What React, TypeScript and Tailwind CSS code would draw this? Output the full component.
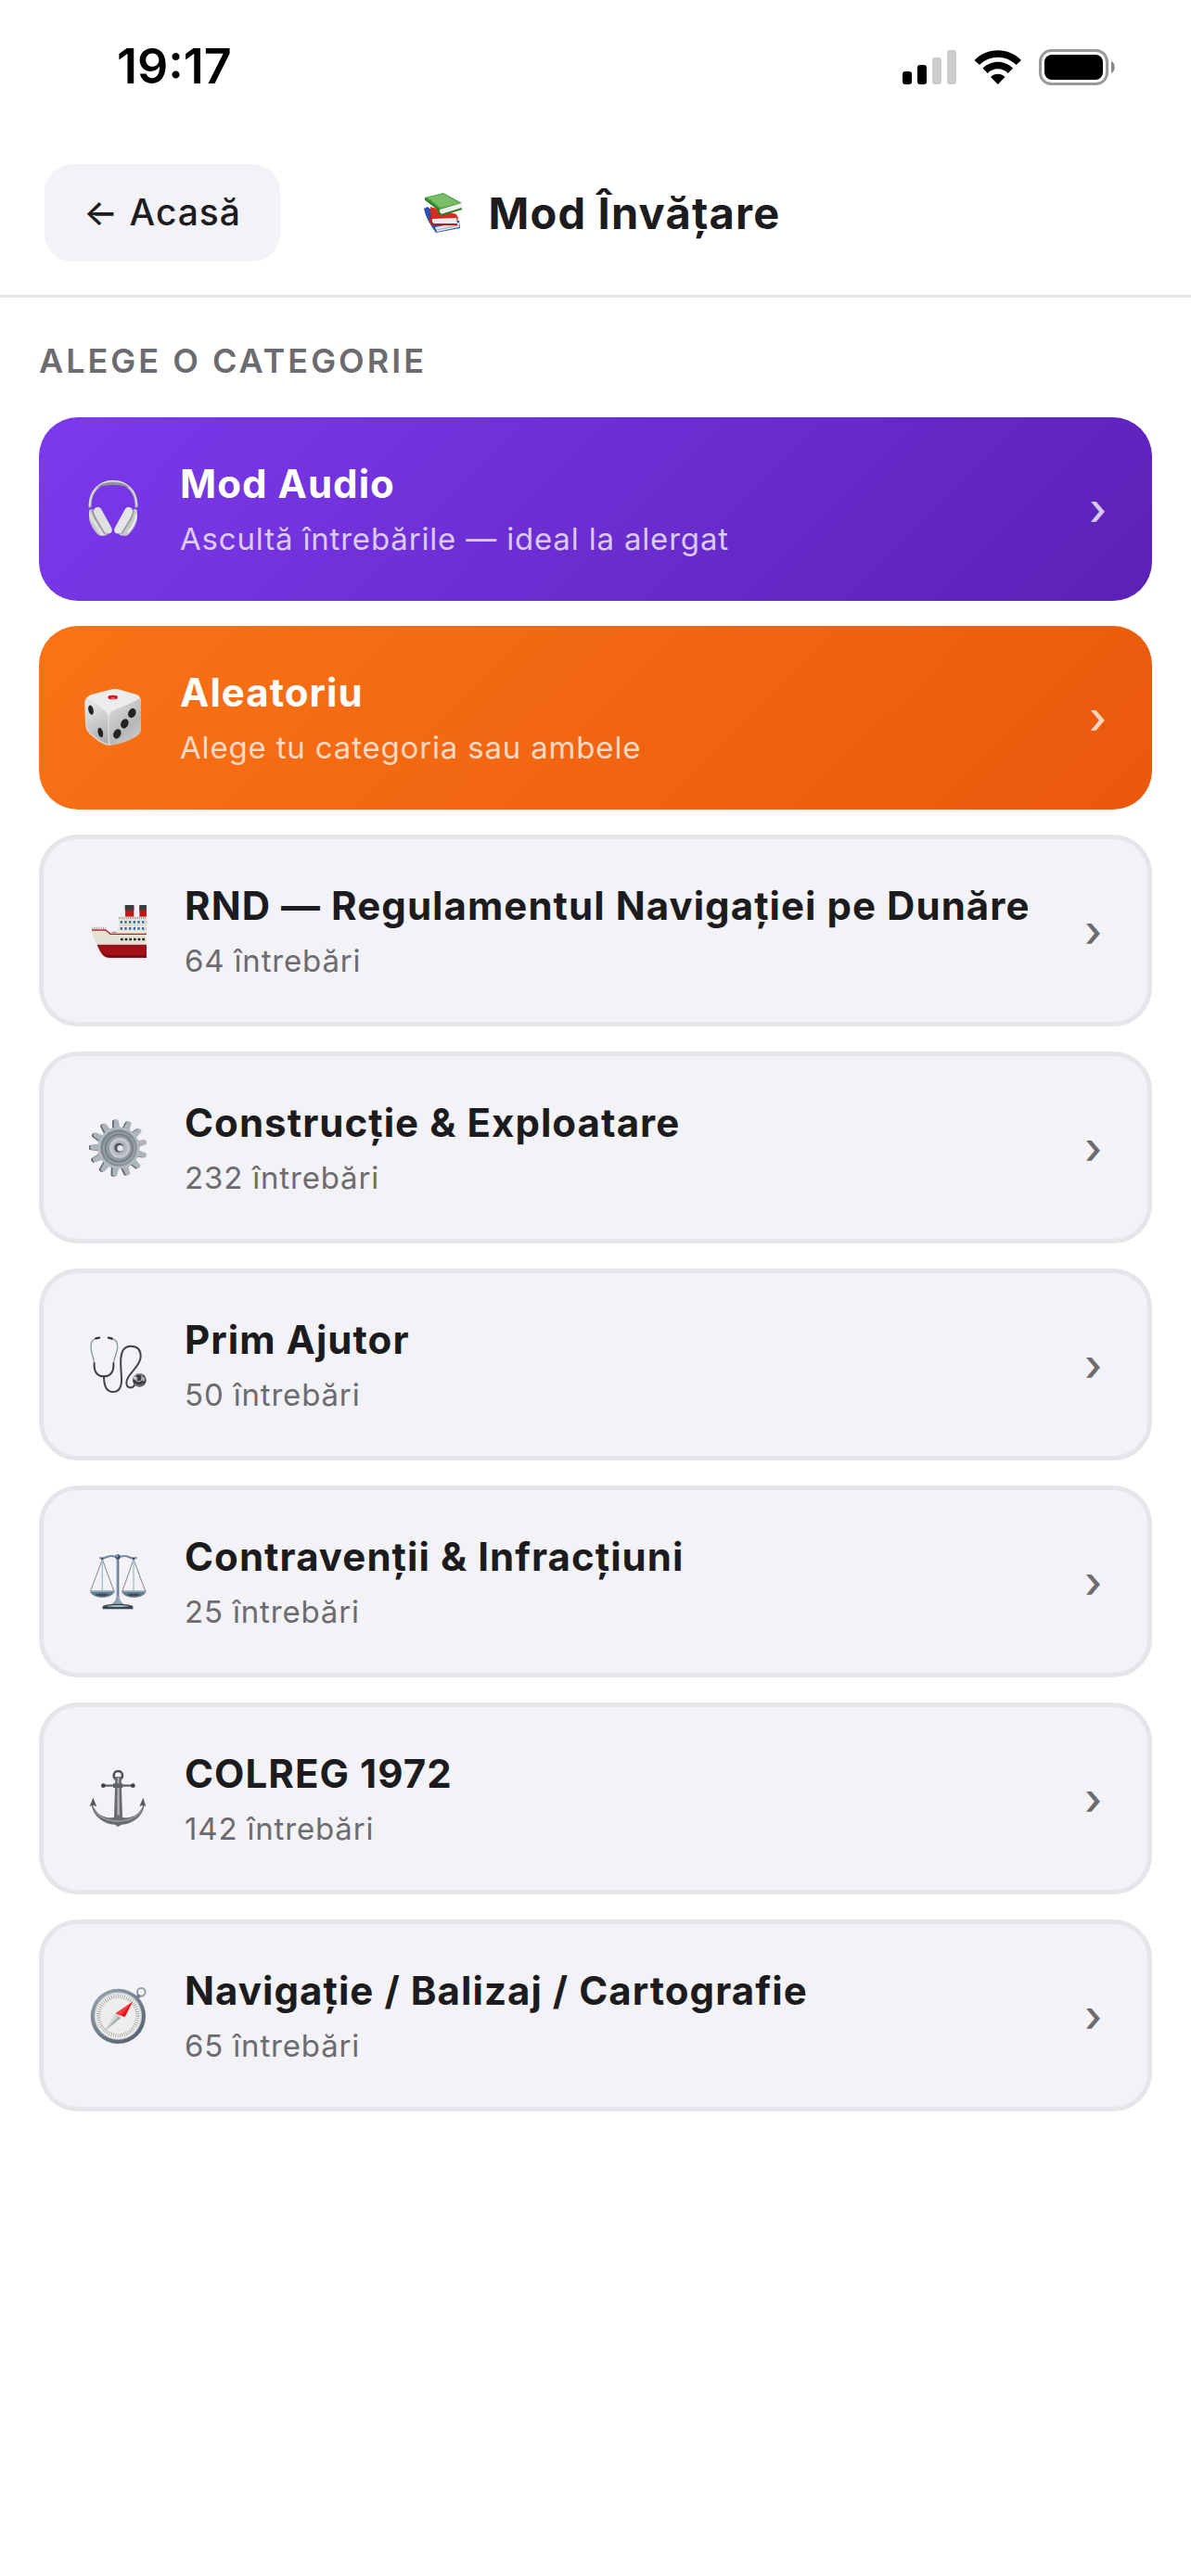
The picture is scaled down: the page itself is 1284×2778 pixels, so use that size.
import type { ReactNode } from 'react'

type Category = {
  title: string
  subtitle: string
  icon: ReactNode
  variant?: 'audio' | 'random'
}

const variants = {
  audio: 'bg-linear-135 from-[#7c3aed] to-[#5b21b6] py-[42px] text-white',
  random: 'bg-linear-135 from-[#f97316] to-[#ea580c] py-[42px] text-white',
  plain: 'border-5 border-[#e5e5ea] bg-[#f2f2f7] pt-[42px] pb-[41px] text-[#1c1c1e]',
}

function Icon({ viewBox, children }: { viewBox: string; children: ReactNode }) {
  return (
    <svg viewBox={viewBox} className="size-[62px] shrink-0" fill="none" aria-hidden="true">
      {children}
    </svg>
  )
}

function Headphones() {
  return (
    <Icon viewBox="183 234 186 186">
      <defs>
        <linearGradient id="cupL" x1="203" y1="385" x2="260" y2="350" gradientUnits="userSpaceOnUse">
          <stop stopColor="#a9abad" />
          <stop offset=".3" stopColor="#e2e4e5" />
          <stop offset=".5" stopColor="#a3a5a7" />
          <stop offset=".7" stopColor="#e9e9ea" />
          <stop offset="1" stopColor="#c4c5c6" />
        </linearGradient>
      </defs>
      <path d="M201 322v-10c2-44 32-74 75-74s73 30 75 74v10" stroke="#b9bbbd" strokeWidth="9" />
      <path d="M200 316c0-48 32-80 76-80s76 32 76 80" stroke="#f1f1f2" strokeWidth="3" />
      <path d="M222 258c16-14 34-17 54-17s38 3 54 17c-16-6-34-9-54-9s-38 3-54 9z" fill="#8f9193" />
      <path d="M198 334v22c2 18 14 40 30 54 8 5 20 4 29 1 2-3 1-8-1-12l-44-70c-6-4-13-2-14 5z" fill="url(#cupL)" />
      <path d="M215 326c6-8 17-8 22 0l33 60c5 9 2 17-6 20-8 2-15-2-19-9l-29-53c-3-7-4-13-1-18z" fill="#dfe0e1" />
      <path d="M210 330c0 10 4 20 10 31l29 46" stroke="#929496" strokeWidth="4" />
      <path d="M354 334v22c-2 18-14 40-30 54-8 5-18 4-27 1-2-3-1-8 1-12l42-70c6-4 13-2 14 5z" fill="#c9cbcd" />
      <path d="M337 326c-6-8-17-8-22 0l-33 60c-5 9-2 17 6 20 8 2 15-2 19-9l29-53c3-7 4-13 1-18z" fill="#e4e5e6" />
      <path d="M342 330c0 10-4 20-10 31l-29 46" stroke="#929496" strokeWidth="4" />
      <path d="M350 344c0 22-12 42-27 58" stroke="#eff0f1" strokeWidth="5" />
    </Icon>
  )
}

function Dice() {
  return (
    <Icon viewBox="183 249 186 186">
      <defs>
        <linearGradient id="dieFront" x1="260" y1="310" x2="360" y2="425" gradientUnits="userSpaceOnUse">
          <stop stopColor="#d9d9d9" />
          <stop offset=".6" stopColor="#b5b7b8" />
          <stop offset="1" stopColor="#cfd0d0" />
        </linearGradient>
        <linearGradient id="dieSide" x1="185" y1="290" x2="255" y2="425" gradientUnits="userSpaceOnUse">
          <stop stopColor="#ececec" />
          <stop offset="1" stopColor="#a9abad" />
        </linearGradient>
      </defs>
      <path d="M206 267l66-17c7-1 14-1 21 0l58 17c10 4 15 11 15 22v84c0 14-5 23-17 30-24 14-50 24-82 28-10 1-20-2-28-7-18-11-30-21-40-31-9-10-12-18-13-30l-2-70c1-14 9-21 22-26z" fill="#dedede" />
      <path d="M186 292c14-2 40 10 58 24 10 8 14 16 14 28l2 84c-28-9-61-35-68-52-6-18-8-66-6-84z" fill="url(#dieSide)" />
      <path d="M262 346c0-17 6-26 20-32 26-10 52-20 79-34 3 3 5 9 5 16v78c0 14-6 22-18 29-24 14-50 24-82 27-4-20-4-60-4-84z" fill="url(#dieFront)" />
      <path d="M192 280c4-8 8-11 16-13l66-16h18l60 17c6 2 9 6 10 11-28 16-52 26-79 36-11 5-17 9-22 20-5-9-9-15-17-21-18-14-36-22-52-34z" fill="#ededec" />
      <ellipse cx="275" cy="276" rx="16" ry="7" fill="#d9101c" />
      <ellipse cx="276" cy="279" rx="8" ry="3" fill="#f2606a" />
      <g fill="#222323">
        <ellipse cx="204" cy="317" rx="8" ry="16" transform="rotate(-14 204 317)" />
        <ellipse cx="235" cy="390" rx="8" ry="16" transform="rotate(-14 235 390)" />
        <ellipse cx="337" cy="327" rx="12" ry="16" transform="rotate(25 337 327)" />
        <ellipse cx="313" cy="361" rx="12" ry="16" transform="rotate(25 313 361)" />
        <ellipse cx="289" cy="394" rx="12" ry="16" transform="rotate(25 289 394)" />
      </g>
    </Icon>
  )
}

// The bow only: the stern runs past the icon box and is cut off.
function Ship() {
  return (
    <Icon viewBox="198 247 186 186">
      <path d="M315 258h28v36h-28zM361 258h28v36h-28z" fill="#c4151c" />
      <path d="M314 256h29v17h-29zM361 256h29v17h-29z" fill="#3d3d3f" />
      <path d="M296 294h92v60H286l8-30z" fill="#e9e6dc" />
      <path d="M294 298h92" stroke="#a9a49b" strokeWidth="7" strokeDasharray="3 3" />
      <path d="M299 311h88M299 332h88" stroke="#2e6da8" strokeWidth="8" strokeDasharray="7 7" />
      <path d="M292 321h96" stroke="#cbc6bb" strokeWidth="2" />
      <path d="M207 336h45l16 13h120v36H226c-11-12-17-30-19-49z" fill="#e7e3d4" />
      <path d="M207 337h45l15 13h121" stroke="#b5222a" strokeWidth="4" />
      <path d="M208 331h44" stroke="#a5a09a" strokeWidth="7" strokeDasharray="3 4" />
      <path d="M268 347l8-5h10v5z" fill="#8d8a86" />
      <path d="M300 367h88" stroke="#292524" strokeWidth="8" strokeDasharray="8 6" />
      <path d="M224 384h164v42H262c-19 0-29-18-38-42z" fill="#a01019" />
      <path d="M240 410c6 10 12 14 22 16h126v-8H262c-10 0-16-3-22-8z" fill="#7c0c14" />
    </Icon>
  )
}

function Gear() {
  const teeth = Array.from({ length: 13 }, (_, i) => (i * 360) / 13 + 22)
  const tooth = 'M134 112l3-29c4-5 11-5 15 0l3 29z'
  return (
    <Icon viewBox="48 79 186 186">
      <g fill="#59616a">
        {teeth.map((angle) => (
          <path key={angle} d={tooth} transform={`translate(-5 1) rotate(${angle} 144 172)`} />
        ))}
      </g>
      <g fill="#adb4bc">
        {teeth.map((angle) => (
          <path key={angle} d={tooth} transform={`rotate(${angle} 144 172)`} />
        ))}
      </g>
      <circle cx="144" cy="172" r="68" fill="#b2b8c0" />
      <circle cx="144" cy="172" r="59" fill="#7f868d" />
      <circle cx="146" cy="174" r="54" fill="#969ca3" />
      <circle cx="145" cy="172" r="44" stroke="#747b83" strokeWidth="5" />
      <circle cx="147" cy="172" r="33" fill="#c3c9cf" />
      <circle cx="147" cy="172" r="24" fill="#aeb5bd" />
      <circle cx="145" cy="171" r="15" fill="#4d535a" />
      <circle cx="149" cy="173" r="10" fill="#e2e5ea" />
    </Icon>
  )
}

function Stethoscope() {
  return (
    <Icon viewBox="48 77 186 186">
      <g strokeLinecap="round">
        <path d="M72 84c-12 2-18 12-18 27 0 18 8 33 11 54M120 84c12 2 20 12 20 27 0 18-10 33-13 54" stroke="#8896a5" strokeWidth="4" />
        <path d="M70 84l11-2M111 82l11 3" stroke="#333" strokeWidth="7" />
        <path d="M65 165c-2 24 8 42 31 42s33-18 31-42" stroke="#3f3f42" strokeWidth="6" />
        <path d="M96 207c0 30 8 50 29 50 20 0 28-16 28-40 0-22-4-42-2-70 2-22 12-38 32-38 22 0 32 14 32 34 0 34-46 56-46 84 0 19 18 21 26 8" stroke="#444447" strokeWidth="6" />
      </g>
      <circle cx="211" cy="219" r="22" fill="#3c3c3f" />
      <circle cx="209" cy="211" r="12" stroke="#a9a9ae" strokeWidth="4" />
      <path d="M193 205l13 6-5 9-11-5z" fill="#c4bfcc" />
      <path d="M218 205l12 7-3 11-12-4z" fill="#a8a8ac" />
      <path d="M196 232c9 6 20 6 29-2" stroke="#77777b" strokeWidth="4" />
    </Icon>
  )
}

function Scales() {
  return (
    <Icon viewBox="48 74 186 186">
      <path d="M82 88c8 6 16 2 24-2 12-5 24-3 35 2 11-5 23-7 35-2 8 4 16 8 26 2" stroke="#6f8ba5" strokeWidth="6" />
      <path d="M141 90v126" stroke="#577792" strokeWidth="8" />
      <path d="M140 92v122" stroke="#9fb8cc" strokeWidth="2" />
      <circle cx="141" cy="86" r="8" fill="#3a5066" />
      <circle cx="139" cy="84" r="3" fill="#b3c6d6" />
      <path d="M91 94L53 196M91 94l37 102M192 94l-36 102M192 94l38 102" stroke="#81868d" strokeWidth="3" />
      <path d="M91 94v100M192 94v100" stroke="#a9bdce" strokeWidth="4" />
      <circle cx="91" cy="92" r="4" fill="#3f4f5e" />
      <circle cx="192" cy="92" r="4" fill="#3f4f5e" />
      <path d="M51 196h80c-4 14-20 21-40 21s-36-7-40-21zM153 196h80c-4 14-20 21-40 21s-36-7-40-21z" fill="#5e7d97" />
      <path d="M51 195h80v5H51zM153 195h80v5h-80z" fill="#92a6b6" />
      <path d="M68 208c14-5 32-5 46 0-12 6-34 6-46 0zM170 208c14-5 32-5 46 0-12 6-34 6-46 0z" fill="#4c4a48" />
      <path d="M137 212h8c2 14 8 22 17 29h-42c9-7 15-15 17-29z" fill="#8fa4b5" />
      <path d="M92 245c10-6 28-7 49-7s39 1 49 7v10H92z" fill="#3a4652" />
      <path d="M104 245c18-4 56-4 74 0-18 4-56 4-74 0z" fill="#a5bac9" />
    </Icon>
  )
}

function Anchor() {
  return (
    <Icon viewBox="48 85 186 186">
      <circle cx="142" cy="102" r="14" stroke="#505356" strokeWidth="8" />
      <path d="M133 106h19l4 134-13 28-14-28z" fill="#66696d" />
      <path d="M140 108h5l2 140h-8z" fill="#b6b9bc" />
      <path d="M94 135h96" stroke="#606366" strokeWidth="7" />
      <circle cx="94" cy="135" r="7" fill="#3e4144" />
      <circle cx="190" cy="135" r="7" fill="#3e4144" />
      <path d="M126 128h31v14h-31z" fill="#606367" />
      <path d="M60 196c7 27 30 41 55 43 12 0 20-4 27-11 7 7 15 11 27 11 25-2 48-16 54-43l3 5c-5 34-38 58-73 60l-11 7-11-7c-35-2-68-26-74-60z" fill="#696c70" />
      <path d="M66 212c14 26 42 37 76 38 34-1 62-12 76-38" stroke="#989b9e" strokeWidth="4" />
      <path d="M61 174l-11 28 12-4 11 5zM223 174l-12 28 12-4 9 5z" fill="#575b60" />
    </Icon>
  )
}

function Compass() {
  return (
    <Icon viewBox="48 95 186 186">
      <defs>
        <linearGradient id="rim" x1="80" y1="110" x2="200" y2="270" gradientUnits="userSpaceOnUse">
          <stop stopColor="#92a0ad" />
          <stop offset=".6" stopColor="#6c7988" />
          <stop offset="1" stopColor="#586370" />
        </linearGradient>
      </defs>
      <circle cx="217" cy="111" r="13" stroke="#929ca6" strokeWidth="6" />
      <path d="M198 124l9-7 8 8-6 9z" fill="#6f7c89" />
      <circle cx="142" cy="189" r="89" fill="url(#rim)" />
      <circle cx="142" cy="188" r="77" fill="#ced2d3" />
      <circle cx="142" cy="189" r="73" fill="#f1f1ef" />
      <circle cx="142" cy="188" r="63" stroke="#8d9092" strokeWidth="13" strokeDasharray="2 5" />
      <circle cx="142" cy="188" r="54" fill="#eceeed" />
      <path d="M189 142l-25 50-30-12z" fill="#e8131f" />
      <path d="M189 142l-40 45-15-7z" fill="#f43d45" />
      <path d="M134 182l17 13-53 43z" fill="#a9adae" />
      <path d="M134 182l9 6-45 50z" fill="#d5d8d8" />
    </Icon>
  )
}

function Books() {
  return (
    <svg viewBox="0 0 42 43" className="h-[43px] w-[42px] shrink-0" fill="none" aria-hidden="true">
      <path d="M0 17l4-2 8 6 26 9 1 8-26 5C8 36 2 27 0 17z" fill="#2d4fae" />
      <path d="M12 37l26-5v5l-24 5z" fill="#e8e8ea" />
      <path d="M13 40l25-5" stroke="#a8abb5" strokeWidth="1" />
      <path d="M7 15l28 8 2 4-3 7H13l-5-5z" fill="#d92a1c" />
      <path d="M9 28l26-1 1 6-25 1c-2-2-3-4-2-6z" fill="#ececee" />
      <path d="M7 26c0 5 1 8 4 8h25" stroke="#b81f15" strokeWidth="2" />
      <path d="M1 5L21 0l20 11-24 8L1 8z" fill="#4e9f40" />
      <path d="M4 5L21 1l17 10-20 5z" fill="#79bd68" />
      <path d="M17 18l24-7v5l-22 7c-2-1-3-3-2-5z" fill="#f0f0f0" />
      <path d="M1 6l15 12c0 3 0 4 3 6l22-7" stroke="#2f7d2b" strokeWidth="2" />
    </svg>
  )
}

function SystemIcons() {
  return (
    <svg viewBox="0 0 230 39" className="h-[39px] w-[230px]" role="img" aria-label="Semnal, Wi-Fi, baterie">
      <rect x="1" y="24" width="10" height="14" rx="3" />
      <rect x="17" y="17" width="10" height="21" rx="3" />
      <rect x="33" y="9" width="10" height="29" rx="3" fill="#ccc" />
      <rect x="49" y="1" width="10" height="37" rx="3" fill="#ccc" />
      <path d="M78.500 12C92 -2.500 115.500 -2.500 129 12L123.500 17C112.500 6 95 6 84 17Z" />
      <path d="M87.500 20.500C96.500 11.500 111 11.500 120 20.500L114.800 26C108.500 19.800 99 19.800 92.700 26Z" />
      <path d="M96 30C100.500 25.800 107 25.800 111.500 30L103.800 38Z" />
      <rect x="149.500" y="1.500" width="72" height="36" rx="12" fill="none" stroke="#999" strokeWidth="3" />
      <rect x="154" y="6" width="63" height="27" rx="8" />
      <path d="M226 13c5 2 5 11 0 13z" fill="#888" />
    </svg>
  )
}

const categories: Category[] = [
  { title: 'Mod Audio', subtitle: 'Ascultă întrebările — ideal la alergat', icon: <Headphones />, variant: 'audio' },
  { title: 'Aleatoriu', subtitle: 'Alege tu categoria sau ambele', icon: <Dice />, variant: 'random' },
  { title: 'RND — Regulamentul Navigației pe Dunăre', subtitle: '64 întrebări', icon: <Ship /> },
  { title: 'Construcție & Exploatare', subtitle: '232 întrebări', icon: <Gear /> },
  { title: 'Prim Ajutor', subtitle: '50 întrebări', icon: <Stethoscope /> },
  { title: 'Contravenții & Infracțiuni', subtitle: '25 întrebări', icon: <Scales /> },
  { title: 'COLREG 1972', subtitle: '142 întrebări', icon: <Anchor /> },
  { title: 'Navigație / Balizaj / Cartografie', subtitle: '65 întrebări', icon: <Compass /> },
]

function CategoryCard({ title, subtitle, icon, variant }: Category) {
  const muted = variant ? 'text-white/75' : 'text-[#6c6c70]'
  return (
    <button
      className={`flex w-full items-center gap-[41px] rounded-[42px] px-[49px] text-left ${variants[variant ?? 'plain']}`}
    >
      {icon}
      <span className="flex min-w-0 flex-1 flex-col gap-1">
        <span className="text-[42px] leading-[60px] font-bold tracking-wide">{title}</span>
        <span className={`text-[33px] leading-[50px] tracking-wide ${muted}`}>{subtitle}</span>
      </span>
      <span className={`text-[47px] leading-[60px] font-medium ${muted}`}>›</span>
    </button>
  )
}

export default function App() {
  return (
    <div className="min-h-screen bg-white font-['Inter',sans-serif] text-[#1c1c1e]">
      <div className="flex h-36 items-center justify-between pr-[82px] pl-[126px] text-black">
        <span className="text-[52px] leading-[60px] font-semibold">19:17</span>
        <SystemIcons />
      </div>

      <header className="flex items-center border-b-3 border-[#e5e5ea] px-12 pt-[33px] pb-9">
        <button className="h-[105px] rounded-[30px] bg-[#f2f2f7] px-[42px] text-[39px] font-medium tracking-wide">
          ← Acasă
        </button>
        <h1 className="flex flex-1 items-center justify-center gap-7 text-[47px] leading-[60px] font-bold tracking-wide">
          <Books />
          Mod Învățare
        </h1>
        <div className="w-60" />
      </header>

      <main className="px-[42px] pt-11">
        <h2 className="text-[36px] leading-[48px] font-semibold tracking-[3px] text-[#6c6c70] uppercase">
          Alege o categorie
        </h2>
        <div className="mt-[37px] flex flex-col gap-[27px]">
          {categories.map((category) => (
            <CategoryCard key={category.title} {...category} />
          ))}
        </div>
      </main>
    </div>
  )
}
